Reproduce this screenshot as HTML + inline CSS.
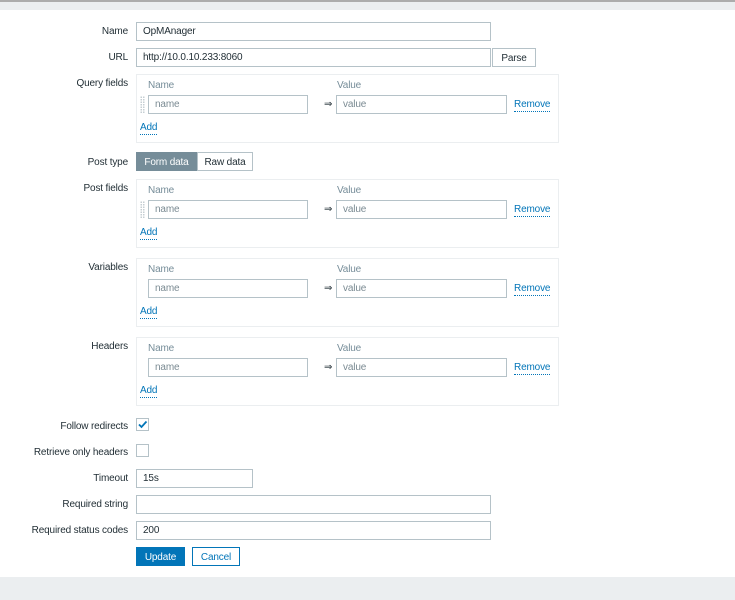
<!DOCTYPE html>
<html><head><meta charset="utf-8"><style>
*{box-sizing:border-box;margin:0;padding:0}
body{width:735px;height:600px;background:#ebeef0;font-family:"Liberation Sans",Arial,sans-serif;font-size:10px;letter-spacing:-0.15px;color:#1f2c33;position:relative;overflow:hidden}
.top{position:absolute;left:0;top:0;width:735px;height:2px;background:#acacac}
.main{position:absolute;left:0;top:10px;width:735px;height:567px;background:#fff}
.a{position:absolute}
.lbl{position:absolute;right:607px;text-align:right;white-space:nowrap;line-height:14px;margin-top:1px}
.in{position:absolute;height:19px;border:1px solid #b5c2c8;background:#fff;padding-left:6px;line-height:18px;color:#1f2c33}
.ph{color:#7a8a92}
.box{position:absolute;left:136px;width:423px;height:69px;border:1px solid #ebeef0}
.hd{position:absolute;color:#768d99;line-height:12px;margin-top:1px}
.lnk{position:absolute;color:#0275b8;border-bottom:1px dotted #0275b8;line-height:12px;margin-top:1px}
.btn{position:absolute;height:19px;border:1px solid #b5c2c8;background:#fff;text-align:center;line-height:19px}
.cb{position:absolute;left:136px;width:13px;height:13px;border:1px solid #b5c2c8;background:#fff}
.drag{position:absolute;width:5px;height:17px;background-image:radial-gradient(#c4cdd2 0.7px,transparent 0.8px);background-size:2.5px 2.5px}
.ar{position:absolute;margin-top:1px}
</style></head><body>
<div class="top"></div>
<div class="main"></div>

<div class="lbl" style="top:24px">Name</div>
<div class="in" style="left:136px;top:22px;width:355px">OpMAnager</div>
<div class="lbl" style="top:50px">URL</div>
<div class="in" style="left:136px;top:48px;width:355px">http://10.0.10.233:8060</div>
<div class="btn" style="left:492px;top:48px;width:44px">Parse</div>

<div class="lbl" style="top:76px">Query fields</div>
<div class="box" style="top:74px"></div>
<div class="hd" style="left:148px;top:79px">Name</div>
<div class="hd" style="left:337px;top:79px">Value</div>
<div class="drag" style="left:140px;top:96px"></div>
<div class="in ph" style="left:148px;top:95px;width:160px">name</div>
<div class="ar" style="left:324px;top:98px">⇒</div>
<div class="in ph" style="left:336px;top:95px;width:171px">value</div>
<div class="lnk" style="left:514px;top:98px">Remove</div>
<div class="lnk" style="left:140px;top:121px">Add</div>

<div class="lbl" style="top:155px">Post type</div>
<div class="btn" style="left:136px;top:152px;width:61px;background:#768d99;border-color:#768d99;color:#fff">Form data</div>
<div class="btn" style="left:197px;top:152px;width:56px">Raw data</div>

<div class="lbl" style="top:181px">Post fields</div>
<div class="box" style="top:179px"></div>
<div class="hd" style="left:148px;top:184px">Name</div>
<div class="hd" style="left:337px;top:184px">Value</div>
<div class="drag" style="left:140px;top:201px"></div>
<div class="in ph" style="left:148px;top:200px;width:160px">name</div>
<div class="ar" style="left:324px;top:203px">⇒</div>
<div class="in ph" style="left:336px;top:200px;width:171px">value</div>
<div class="lnk" style="left:514px;top:203px">Remove</div>
<div class="lnk" style="left:140px;top:226px">Add</div>

<div class="lbl" style="top:260px">Variables</div>
<div class="box" style="top:258px"></div>
<div class="hd" style="left:148px;top:263px">Name</div>
<div class="hd" style="left:337px;top:263px">Value</div>
<div class="in ph" style="left:148px;top:279px;width:160px">name</div>
<div class="ar" style="left:324px;top:282px">⇒</div>
<div class="in ph" style="left:336px;top:279px;width:171px">value</div>
<div class="lnk" style="left:514px;top:282px">Remove</div>
<div class="lnk" style="left:140px;top:305px">Add</div>

<div class="lbl" style="top:339px">Headers</div>
<div class="box" style="top:337px"></div>
<div class="hd" style="left:148px;top:342px">Name</div>
<div class="hd" style="left:337px;top:342px">Value</div>
<div class="in ph" style="left:148px;top:358px;width:160px">name</div>
<div class="ar" style="left:324px;top:361px">⇒</div>
<div class="in ph" style="left:336px;top:358px;width:171px">value</div>
<div class="lnk" style="left:514px;top:361px">Remove</div>
<div class="lnk" style="left:140px;top:384px">Add</div>

<div class="lbl" style="top:419px">Follow redirects</div>
<div class="cb" style="top:418px"><svg width="11" height="11" viewBox="0 0 11 11" style="position:absolute;left:0;top:0"><path d="M2 5.5 L4.5 8 L9.5 2.5" fill="none" stroke="#0275b8" stroke-width="1.8"/></svg></div>
<div class="lbl" style="top:445px">Retrieve only headers</div>
<div class="cb" style="top:444px"></div>

<div class="lbl" style="top:471px">Timeout</div>
<div class="in" style="left:136px;top:469px;width:117px">15s</div>
<div class="lbl" style="top:497px">Required string</div>
<div class="in" style="left:136px;top:495px;width:355px"></div>
<div class="lbl" style="top:523px">Required status codes</div>
<div class="in" style="left:136px;top:521px;width:355px">200</div>

<div class="btn" style="left:136px;top:547px;width:49px;background:#0275b8;border-color:#0275b8;color:#fff">Update</div>
<div class="btn" style="left:192px;top:547px;width:48px;border-color:#0275b8;color:#0275b8">Cancel</div>
</body></html>
